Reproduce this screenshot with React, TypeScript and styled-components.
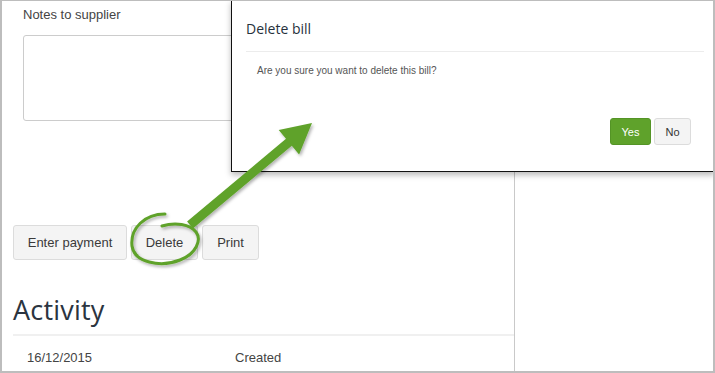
import styled, { createGlobalStyle } from "styled-components";

const GlobalStyle = createGlobalStyle`
  html, body {
    margin: 0;
    padding: 0;
    background: #fff;
  }
  * {
    box-sizing: border-box;
  }
`;

const green = "#5fa22b";

const Frame = styled.div`
  position: relative;
  width: 715px;
  height: 373px;
  border: 2px solid #bdbdbd;
  border-top-width: 1px;
  display: grid;
  grid-template-columns: 513px 1fr;
  overflow: hidden;
  font-family: "Liberation Sans", Arial, sans-serif;
  color: #333;
`;

const MainCol = styled.div`
  border-right: 1px solid #c9c9c9;
  padding: 6px 0 0 9px;
`;

const SideCol = styled.div`
  background: #fff;
`;

const FieldLabel = styled.div`
  padding-left: 12px;
  font-size: 13px;
  line-height: 16px;
  color: #444;
`;

const NotesBox = styled.textarea`
  display: block;
  margin: 12px 0 0 12px;
  width: 470px;
  height: 86px;
  border: 1px solid #ccc;
  border-radius: 3px;
  resize: none;
  outline: none;
`;

const ButtonRow = styled.div`
  display: flex;
  gap: 4px;
  margin: 104px 0 0 2px;
`;

const ActionButton = styled.button<{ $w: number }>`
  width: ${(p) => p.$w}px;
  height: 35px;
  background: #f4f4f4;
  border: 1px solid #dcdcdc;
  border-radius: 3px;
  font-family: "Liberation Sans", Arial, sans-serif;
  font-size: 13px;
  color: #3a3a3a;
  padding: 0;
`;

const Heading = styled.h2`
  margin: 33px 0 0 2px;
  font-family: "Open Sans", "DejaVu Sans", sans-serif;
  font-weight: 400;
  font-size: 27px;
  line-height: 34px;
  color: #2b3440;
  letter-spacing: 0.2px;
`;

const Rule = styled.div`
  height: 2px;
  background: #f0f0f0;
  margin: 7px 0 0 2px;
`;

const ActivityRow = styled.div`
  display: grid;
  grid-template-columns: 208px 1fr;
  padding: 14px 0 0 16px;
  font-size: 13px;
  line-height: 16px;
  color: #444;
`;

const Modal = styled.div`
  position: absolute;
  left: 229px;
  top: -1px;
  width: 484px;
  height: 172px;
  background: #fff;
  border-left: 1px solid #111;
  border-bottom: 1px solid #111;
  border-top: 1px solid #bdbdbd;
  box-shadow: 0 3px 6px rgba(0, 0, 0, 0.28);
  display: flex;
  flex-direction: column;
`;

const ModalHeader = styled.div`
  margin: 0 11px 0 14px;
  padding: 19px 0 13px;
  border-bottom: 1px solid #ececec;
  font-family: "Open Sans", "DejaVu Sans", sans-serif;
  font-size: 14px;
  line-height: 18px;
  color: #26313c;
`;

const ModalBody = styled.div`
  padding: 13px 0 0 25px;
  height: 66px;
  font-size: 10px;
  line-height: 12px;
  color: #555;
`;

const ModalFooter = styled.div`
  display: flex;
  justify-content: flex-end;
  gap: 3px;
  padding-right: 24px;
`;

const ModalButton = styled.button<{ $primary?: boolean; $w: number }>`
  width: ${(p) => p.$w}px;
  height: 27px;
  border-radius: 3px;
  border: 1px solid ${(p) => (p.$primary ? "#549426" : "#dcdcdc")};
  background: ${(p) => (p.$primary ? green : "#f4f4f4")};
  color: ${(p) => (p.$primary ? "#fff" : "#333")};
  font-family: "Liberation Sans", Arial, sans-serif;
  font-size: 11px;
  padding: 0;
`;

const Annotation = styled.svg`
  position: absolute;
  left: -2px;
  top: -1px;
  width: 715px;
  height: 373px;
  pointer-events: none;
`;

export default function App() {
  return (
    <>
      <GlobalStyle />
      <Frame>
        <MainCol>
          <FieldLabel>Notes to supplier</FieldLabel>
          <NotesBox readOnly />
          <ButtonRow>
            <ActionButton $w={114}>Enter payment</ActionButton>
            <ActionButton $w={67}>Delete</ActionButton>
            <ActionButton $w={57}>Print</ActionButton>
          </ButtonRow>
          <Heading>Activity</Heading>
          <Rule />
          <ActivityRow>
            <span>16/12/2015</span>
            <span>Created</span>
          </ActivityRow>
        </MainCol>
        <SideCol />
        <Modal>
          <ModalHeader>Delete bill</ModalHeader>
          <ModalBody>Are you sure you want to delete this bill?</ModalBody>
          <ModalFooter>
            <ModalButton $primary $w={41}>
              Yes
            </ModalButton>
            <ModalButton $w={37}>No</ModalButton>
          </ModalFooter>
        </Modal>
        <Annotation viewBox="0 0 715 373">
          <defs>
            <filter id="shadow" x="-20%" y="-20%" width="140%" height="140%">
              <feDropShadow dx="1.5" dy="2" stdDeviation="1.5" floodColor="#000" floodOpacity="0.3" />
            </filter>
          </defs>
          <g filter="url(#shadow)">
            <path
              d="M165 214 C 145 214, 130 228, 132 246 C 134 262, 160 268, 180 260 C 196 254, 202 240, 196 232 C 190 224, 175 222, 162 226"
              fill="none"
              stroke={green}
              strokeWidth={3}
              strokeLinecap="round"
            />
            <polygon
              points="192.9,228.5 291.8,145.7 299.1,154.5 312,123 278.7,129.9 286,138.7 187.1,221.5"
              fill={green}
            />
          </g>
        </Annotation>
      </Frame>
    </>
  );
}
